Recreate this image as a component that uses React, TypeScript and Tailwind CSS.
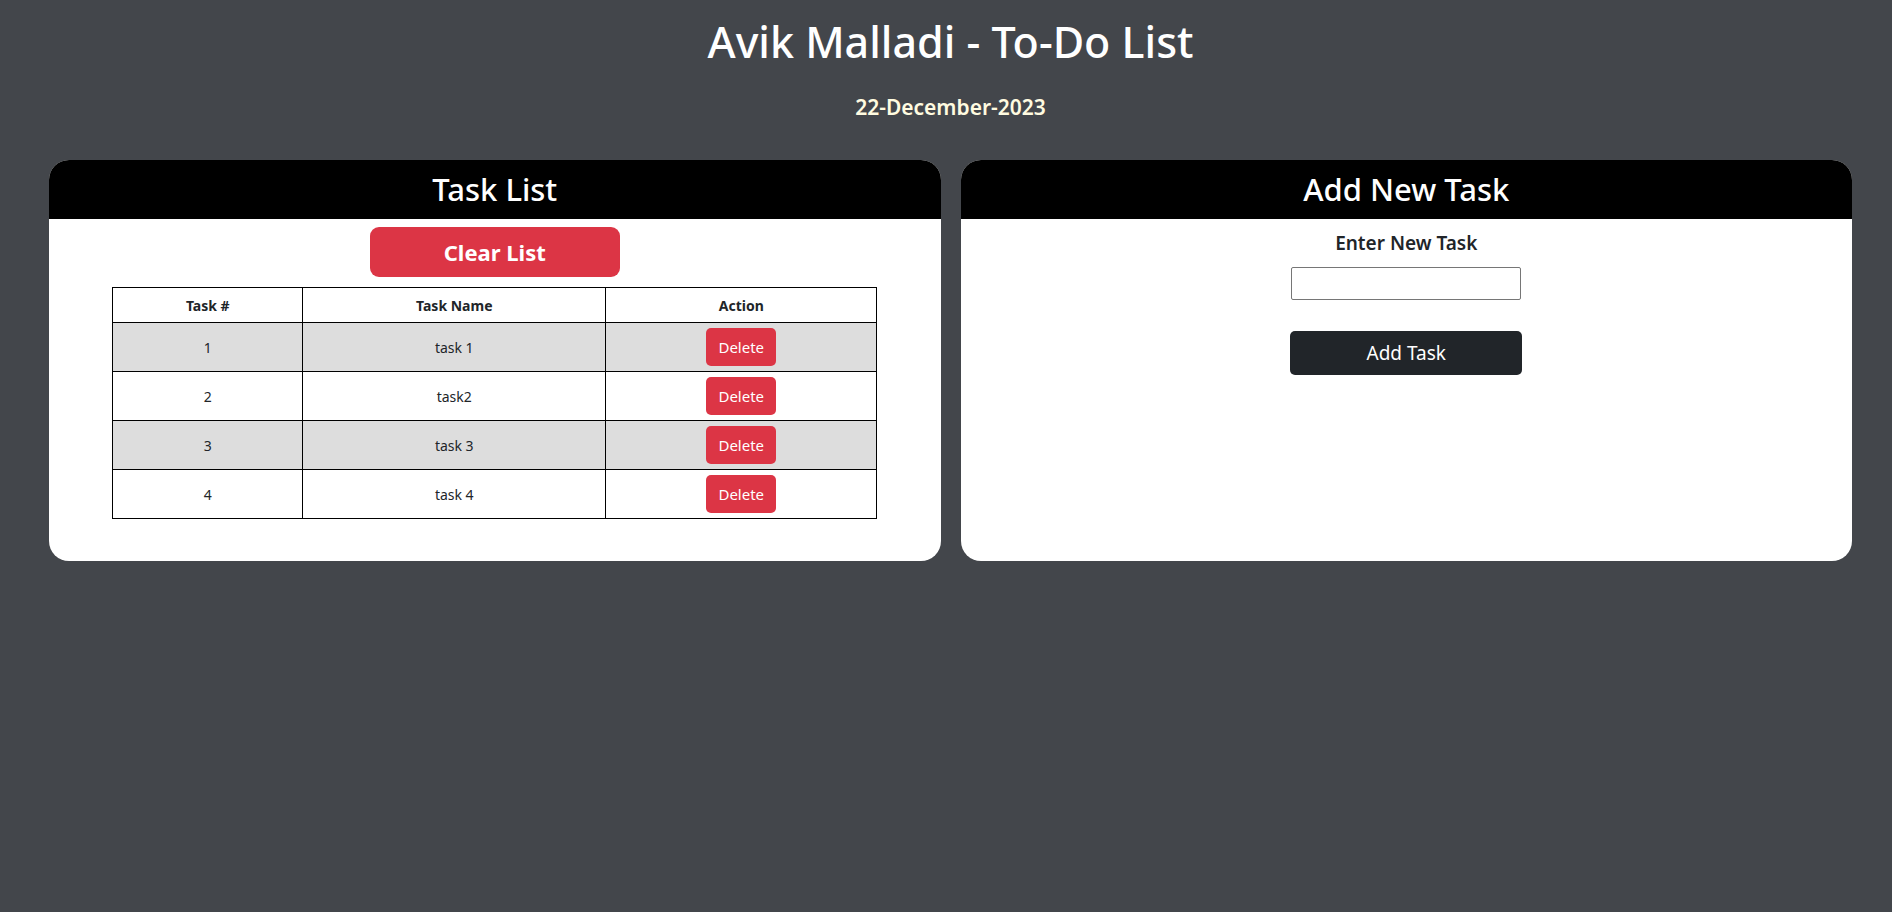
import React from "react";

const tasks = [
  { n: 1, name: "task 1" },
  { n: 2, name: "task2" },
  { n: 3, name: "task 3" },
  { n: 4, name: "task 4" },
];

export default function App() {
  return (
    <div
      className="min-h-[912px] w-full bg-[#43464b] pl-[49px] pr-[40px] text-[#212529]"
      style={{ fontFamily: '"Noto Sans", "Open Sans", sans-serif' }}
    >
      <h1 className="pt-[16px] text-center text-[43px] font-medium leading-[52px] text-white">
        Avik Malladi - To-Do List
      </h1>
      <div className="mt-[26px] text-center text-[21px] font-semibold leading-[26px] text-[#fffbe0]">
        22-December-2023
      </div>
      <div className="mt-[40px] flex gap-[20px]">
        <div className="flex h-[401px] flex-1 flex-col overflow-hidden rounded-[20px] bg-white">
          <div className="flex h-[59px] items-center justify-center bg-black">
            <h2 className="text-[31px] font-medium text-white">Task List</h2>
          </div>
          <div className="flex flex-col items-center pt-[8px]">
            <button className="h-[50px] w-[250px] rounded-[9px] bg-[#dc3545] text-[22px] font-bold text-white">
              Clear List
            </button>
            <table className="mt-[10px] w-[765px] border-collapse text-[14px]">
              <thead>
                <tr className="h-[35px]">
                  <th className="w-[190px] border border-black font-bold">Task #</th>
                  <th className="w-[303px] border border-black font-bold">Task Name</th>
                  <th className="border border-black font-bold">Action</th>
                </tr>
              </thead>
              <tbody>
                {tasks.map((t, i) => (
                  <tr key={t.n} className={`h-[49px] ${i % 2 === 0 ? "bg-[#dddddd]" : "bg-white"}`}>
                    <td className="border border-black text-center">{t.n}</td>
                    <td className="border border-black text-center">{t.name}</td>
                    <td className="border border-black text-center">
                      <button className="h-[38px] w-[70px] rounded-[5px] bg-[#dc3545] text-[15px] text-white">
                        Delete
                      </button>
                    </td>
                  </tr>
                ))}
              </tbody>
            </table>
          </div>
        </div>
        <div className="flex h-[401px] flex-1 flex-col overflow-hidden rounded-[20px] bg-white">
          <div className="flex h-[59px] items-center justify-center bg-black">
            <h2 className="text-[31px] font-medium text-white">Add New Task</h2>
          </div>
          <div className="flex flex-col items-center pt-[10px]">
            <label className="text-[19px] font-semibold leading-[28px]">Enter New Task</label>
            <input
              type="text"
              className="mt-[10px] h-[33px] w-[230px] rounded-[2px] border border-[#767676] bg-white"
            />
            <button className="mt-[31px] h-[44px] w-[232px] rounded-[5px] bg-[#212529] text-[19px] text-white">
              Add Task
            </button>
          </div>
        </div>
      </div>
    </div>
  );
}
